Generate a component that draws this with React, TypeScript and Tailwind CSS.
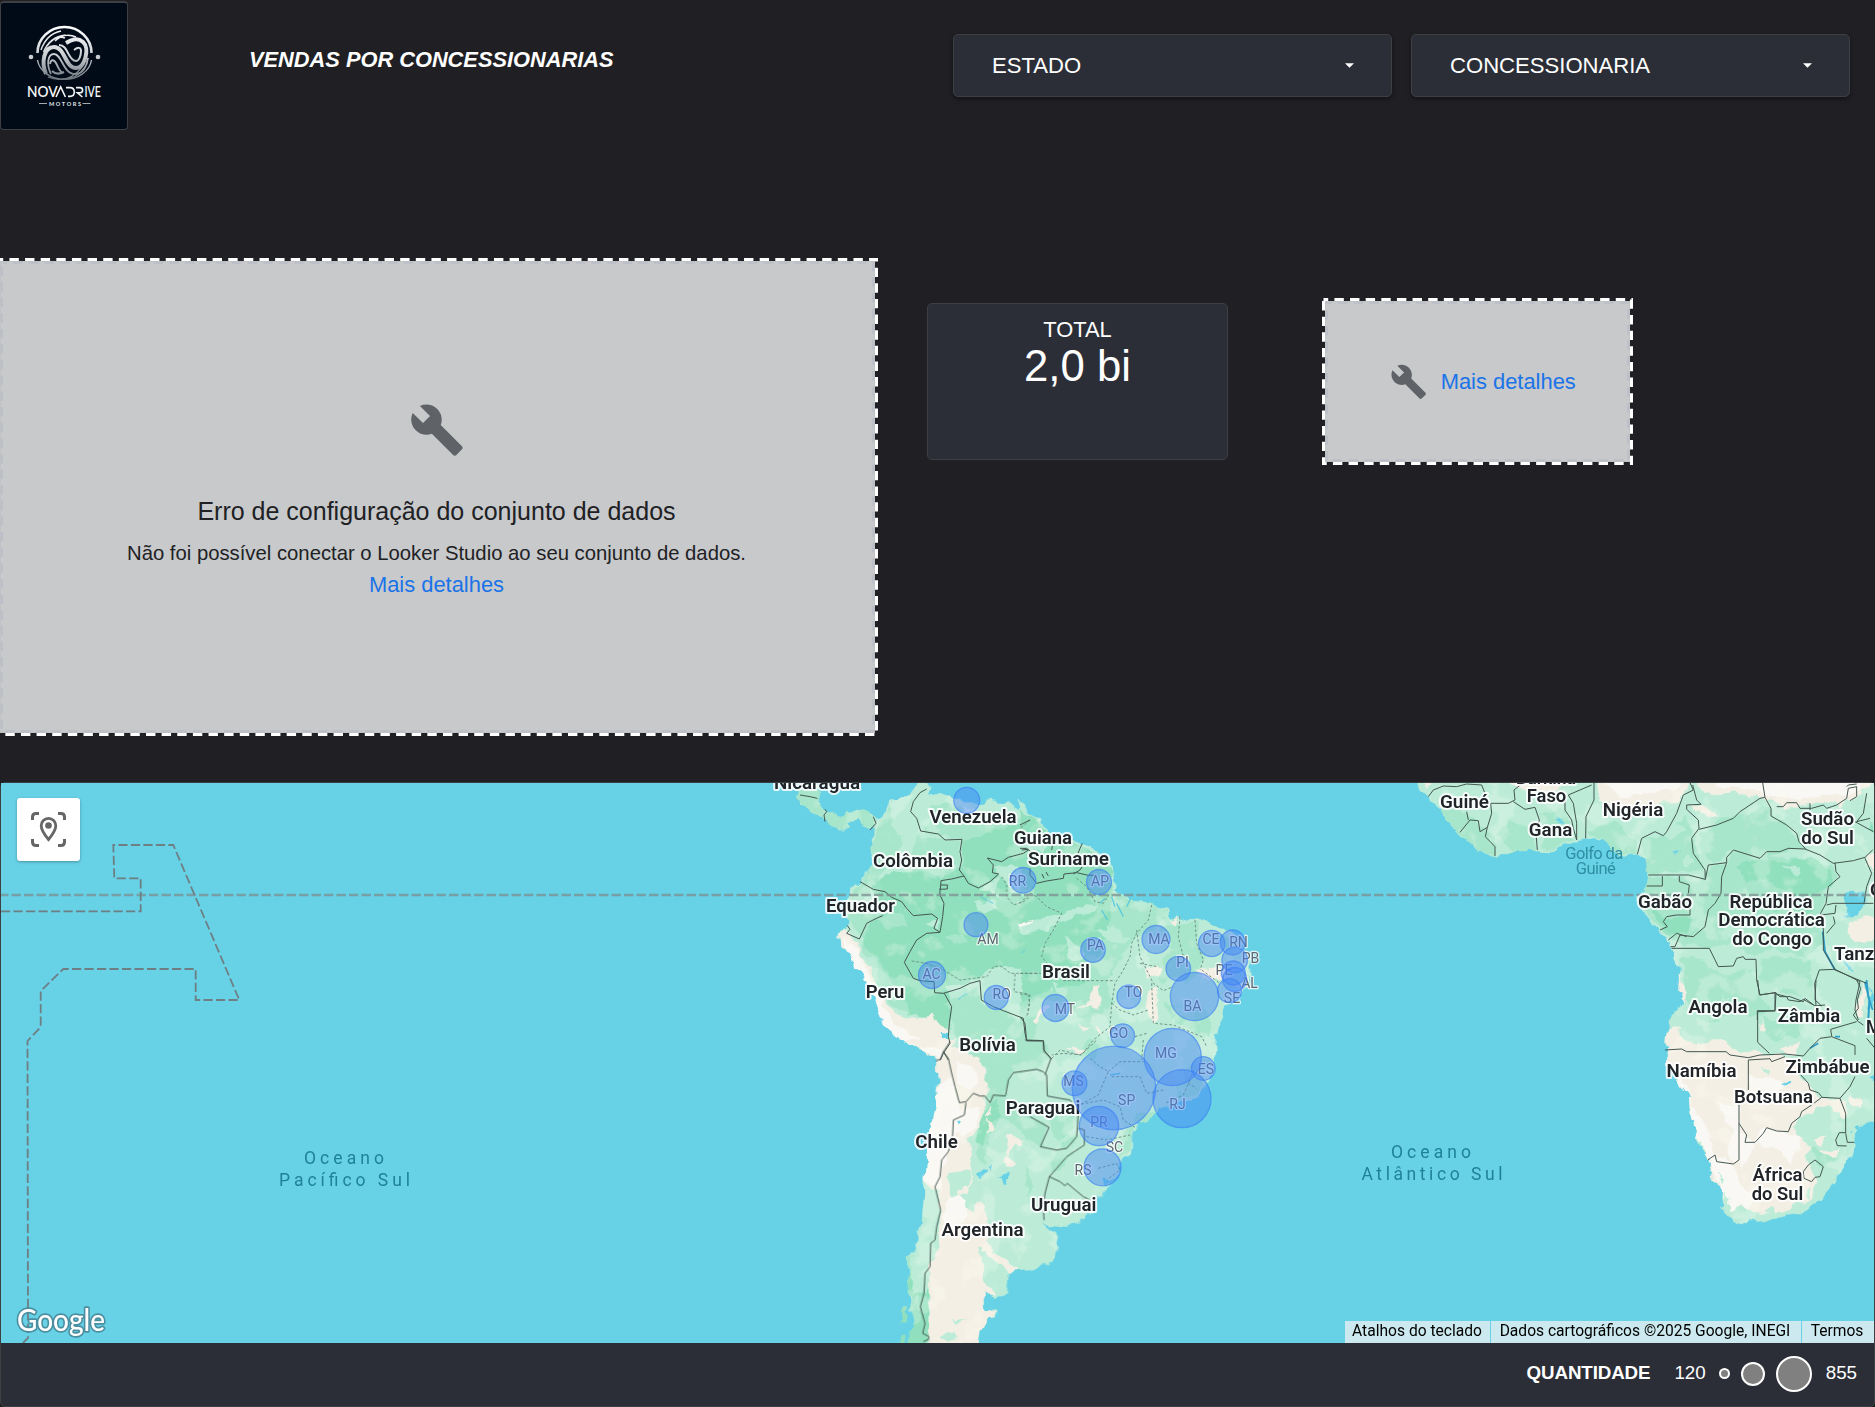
import React from "react";

const WRENCH =
  "M22.7 19l-9.1-9.1c.9-2.3.4-5-1.5-6.9-2-2-5-2.4-7.4-1.3L9 6 6 9 1.6 4.7C.4 7.1.9 10.1 2.9 12.1c1.9 1.9 4.6 2.4 6.9 1.5l9.1 9.1c.4.4 1 .4 1.4 0l2.3-2.3c.5-.4.5-1.1.1-1.4z";

function Wrench({ className }: { className: string }) {
  return (
    <svg viewBox="0 0 24 24" className={className}>
      <path d={WRENCH} fill="#5f6368" />
    </svg>
  );
}

function Logo() {
  return (
    <div className="mt-px h-[129px] w-[128px] shrink-0 overflow-hidden rounded-[4px] border border-[#3c4043] border-t-2 bg-[#010b18]">
      <svg viewBox="1 3 126 126" className="block h-full w-full">
        <defs>
          <linearGradient id="silver" gradientUnits="userSpaceOnUse" x1="0" y1="26" x2="0" y2="84">
            <stop offset="0" stopColor="#ffffff" />
            <stop offset="0.5" stopColor="#ccd0d4" />
            <stop offset="1" stopColor="#5d656e" />
          </linearGradient>
        </defs>
        <g fill="none" stroke="url(#silver)" strokeLinecap="butt">
          <path d="M37.5 53a27 26 0 0 1 54 0" strokeWidth="2.6" />
          <path d="M37.500 60a27.200 22 0 0 0 54 0" strokeWidth="1.4" />
          <path d="M46 74c-5-12-2-27 8-27 11 0 11 21 22 21 9 0 14-20 7-26-6-5-12-2-17 1" strokeWidth="4" />
          <path d="M51 74c-5-10-3-20 3-20 8 0 9 20 21 20 8 0 12-8 13-16" strokeWidth="1.8" />
          <path d="M50 64c1-6 5-4 7 1s4 7 6 8M52 71c4 4 8 3 12 1" strokeWidth="2" />
          <path d="M59 45c5 0 7 4 9 8s5 8 8 8c3 0 5-5 5-10 0-4-3-4-7-1" strokeWidth="2" />
          <path d="M41 50c4-12 11-17 20-19M43.500 52c5-12 13-16 22-17M47 46c6-8 12-10 18-8M55 41c6-6 14-7 21-4" strokeWidth="1.5" />
          <path d="M48 77c12 5 26 3 37-14M62 79c9 0 18-4 23-12" strokeWidth="1.3" />
        </g>
        <circle cx="31" cy="57" r="2.3" fill="#c9cdd2" />
        <circle cx="98" cy="57" r="2.3" fill="#c9cdd2" />
        <text x="27" y="97" textLength="30.500" lengthAdjust="spacingAndGlyphs" fill="#f4f5f6" fontFamily="Lato, sans-serif" fontWeight="600" fontSize="14.5">
          NOV
        </text>
        <path d="M56 97l4.700-10 4.700 10M66 87.600h4q4.300 0 4.300 4.400 0 4.400-4.300 4.400h-2M76 87.600h4q2.600 0 2.600 2.600t-2.600 2.600h-2.600l5 4.200" fill="none" stroke="#f4f5f6" strokeWidth="1.600" />
        <text x="84.500" y="97" textLength="16.500" lengthAdjust="spacingAndGlyphs" fill="#f4f5f6" fontFamily="Lato, sans-serif" fontWeight="600" fontSize="14.5">
          IVE
        </text>
        <text x="49" y="105.700" textLength="32" fill="#d7dadd" fontFamily="Lato, sans-serif" fontWeight="900" fontSize="5.6">
          MOTORS
        </text>
        <path d="M39 103.500h8M82.500 103.500h8" stroke="#b9bdc2" strokeWidth="0.9" />
      </svg>
    </div>
  );
}

function Dropdown({ label }: { label: string }) {
  return (
    <div className="flex h-[63px] w-[439px] items-center justify-between rounded-[5px] border border-[#3c4043] bg-[#2c2e37] pr-[37px] pl-[38px] shadow-[0_2px_4px_rgba(0,0,0,0.45)]">
      <span className="pt-px text-[22.1px] text-white">{label}</span>
      <svg viewBox="0 0 10 5" className="h-[5px] w-[9px]">
        <path d="M0 0h10L5 5z" fill="#fff" />
      </svg>
    </div>
  );
}

function DashedFrame({ w, h }: { w: number; h: number }) {
  return (
    <svg viewBox={`0 0 ${w} ${h}`} className="pointer-events-none absolute inset-0 h-full w-full">
      <rect x="1.500" y="1.500" width={w - 3} height={h - 3} fill="none" stroke="#201f24" strokeWidth="3.100" />
      <rect x="1.500" y="1.500" width={w - 3} height={h - 3} fill="none" stroke="#fff" strokeWidth="3.100" strokeDasharray="9.4 6.23" strokeDashoffset="4.700" />
      <rect x="4.500" y="4.500" width={w - 9} height={h - 9} fill="none" stroke="#bdc0c6" strokeWidth="3" strokeDasharray="9.4 6.23" strokeDashoffset="4" />
    </svg>
  );
}

const AT = {
  a: "translate(760 770) scale(0.33333)",
  b: "translate(1020 770) scale(0.33333)",
  c: "translate(860 1040) scale(0.33333)",
  d: "translate(1400 770) scale(0.33333)",
  e: "translate(1600 980) scale(0.33333)",
};

const LIGHT = "#bcecd8";
const MID = "#a8e6cb";
const DARK = "#91e0bd";
const SAND = "#f4efe4";
const SNOW = "#faf8f4";
const SEA = "#67d1e6";

type Shape = [keyof typeof AT, string, string];

const SHAPES: Shape[] = [
  // coastlines
  ["a", MID, "M112 78L130 20H175L172 80 190 112 212 130 242 145 272 122 300 120 335 133 350 150 345 185 325 165 295 140 265 160 262 178 245 178 235 165 190 152 150 122 120 108Z"],
  ["a", LIGHT, "M343 160L362 150 375 122 400 92 440 75 475 50 500 38 507 48 500 70 520 100 500 95 507 70 540 65 580 85 640 103 690 90 720 96 750 88 765 110 800 135 842 155V872H552L520 850 470 830 430 810 375 765 370 740 345 690 320 640 290 590 265 545 245 525 240 490 262 470 268 450 257 440V400L268 370 300 335 330 300 345 270 340 230 335 200Z"],
  ["b", LIGHT, "M-2 90L20 130 60 160 120 205 180 220 220 235 250 265 275 290 285 320 292 345 275 365 285 380 330 385 400 400 440 420 445 440 480 438 500 448 560 448 600 470 640 490 670 530 692 570 690 610 680 650 640 690 610 715 595 760 587 800 582 872H-2Z"],
  ["c", LIGHT, "M134 -2H1065L1062 60 1050 110 1020 160 970 185 920 200 880 220 830 250 815 275 810 310 803 350 770 400 740 440 700 495 685 520 660 545 620 560 570 552 550 542 580 575 593 620 570 670 510 690 450 695 446 720 443 760 405 770 370 760V800L385 817 400 812 398 805 408 808V830L385 835 365 870 360 920H150L165 860 155 810 145 730V650L165 630 185 560 195 480V420L200 350 210 290 225 220 235 150 232 70 215 50 180 30Z"],
  ["d", LIGHT, "M30 20L80 70 95 95 130 125 135 150 180 190 230 235 285 260 340 240 400 238 435 248 490 230 530 212 590 200 615 210 640 245 670 255 712 253 740 268 748 300 742 340 738 362 715 390 725 420 760 460 800 500 815 540 840 600 838 620 855 665 850 700 825 720 815 752H1440V20Z"],
  ["e", LIGHT, "M238 -2L250 40 253 70 235 90 215 110 205 150 198 210 200 250 235 300 270 350 275 400 285 450 300 500 325 540 345 600 370 640 362 680 385 710 410 735 450 720 540 712 610 700 660 660 700 610 730 560 750 535 760 490 757 460 770 440 840 418V315L812 297 840 280V-2Z"],
  // Amazon basin and north
  ["a", MID, "M345 185L362 150 400 100 450 85 440 180 410 250 370 300 345 345 300 400 262 450 268 395 330 300ZM520 100L600 110 650 140 842 160V250L690 265 620 210 560 205 500 180ZM480 190L550 210 600 215 600 310 540 330 470 320 440 270Z"],
  ["a", DARK, "M340 345L400 310 470 300 540 320 600 290 610 215 640 205 660 240 690 265 720 310 660 360 760 400 842 410V600L740 590 700 590 640 630 560 650 580 720 560 790 500 740 440 730 390 660 350 590 310 540 300 500 330 450 380 420 350 390Z"],
  ["a", DARK, "M620 215L700 180 780 165 842 230V370L760 400 700 370 720 310 690 270Z"],
  ["a", MID, "M575 690L640 660 670 700 740 730 790 760 842 820V872H680L640 800 580 760ZM262 440L330 390 360 430 300 500ZM300 520L350 560 400 640 450 730 400 710 340 640Z"],
  ["a", LIGHT, "M670 650L760 625 842 640V730L770 740 720 710ZM700 290L842 290V340L760 370ZM400 90L440 75 460 130 430 200 400 170ZM640 400L700 390 720 420 670 430ZM500 460L530 440 540 480ZM300 540L345 570 365 620 345 640Z"],
  ["a", MID, "M350 440L420 430 440 460 380 480ZM560 700L620 720 640 790 700 850 650 870 590 800ZM560 500L600 495 620 515 580 520Z"],
  ["b", DARK, "M0 120L60 165 130 210 200 235 260 280 280 310 270 380 290 430 250 480 270 520 240 590 280 620 200 640 130 690 90 650 50 730 0 700Z"],
  ["b", MID, "M280 380L400 400 440 430 400 480 350 500 300 560 260 640 280 700 200 760 150 700 120 760 60 740 30 800 0 800V700L90 660 200 640 260 500Z"],
  ["b", LIGHT, "M0 470L60 455 130 430 200 405 230 410 200 430 130 450 70 480 0 490ZM230 480L280 470 330 510 290 520ZM95 640L140 660 130 690ZM0 810L80 790 150 830 130 870H0ZM130 500L170 520 190 560 150 570 140 540ZM0 210L50 190 100 215 60 250 0 240Z"],
  ["b", MID, "M450 460L540 455 520 510 560 570 500 640 460 620 420 640 380 560 400 500ZM580 500L650 500 680 560 640 560ZM430 700L560 720 575 800 470 760Z"],
  ["b", SAND, "M375 590L410 580 430 600 410 625 380 615ZM388 660L412 650 410 700 415 750 400 760 388 720ZM525 600L600 595 640 600 620 630 560 620ZM220 650L238 645 245 690 235 720 200 705 175 712 215 690ZM40 750L75 705 95 710 60 735 45 765ZM230 765L240 790 225 785ZM450 445L480 440 470 460ZM180 770L205 775 190 785ZM0 462L35 457 0 470ZM640 650L665 640 670 655Z"],
  ["b", DARK, "M0 835L30 815 55 850 40 870H0Z"],
  // desert coast of Peru
  ["a", SAND, "M240 488L262 480 290 515 305 560 345 620 375 690 410 735 470 745 520 738 560 780 565 815 600 840 620 872H552L520 850 430 810 375 765 370 740 320 640 265 545 245 525Z"],
  ["a", SNOW, "M250 500L285 530 330 620 370 700 395 750 460 800 550 860 520 855 430 812 372 765 345 690 265 545ZM780 465L815 458 790 472ZM600 110L640 118 620 122Z"],
  ["a", SEA, "M540 793L560 795 572 815 560 820 540 805Z"],
  // Andes, Pampas and Patagonia
  ["c", MID, "M290 -2H550L570 55 550 90 460 98 437 165 390 185 375 150 385 90 340 50ZM365 190L440 170 560 262 545 320 500 290 470 260 420 240 390 290 370 370 350 340ZM145 650L190 640 212 600 205 700 190 760 185 910H150L165 860 155 810Z"],
  ["c", DARK, "M380 190L410 180 420 230 390 260 365 320 350 300ZM145 700L175 690 190 730 160 790 145 740ZM180 770L205 750 210 910H175ZM122 850L135 790 145 800 140 850ZM152 870L175 850 180 920H152ZM120 880L135 878 137 910H122Z"],
  ["c", MID, "M600 300L650 290 620 380 570 400ZM500 380L520 430 500 470ZM830 220L880 215 870 235 815 250 810 300 780 370 785 300ZM680 0L720 20 700 60 660 40ZM950 100L1050 60 1020 150 960 180ZM570 210L640 215 645 260 590 300Z"],
  ["c", SAND, "M134 -2H290L280 20 340 50 378 90 380 160 362 210 360 260 325 300 335 370 330 460 300 460 310 500 345 520 350 490 372 490 385 560 382 600 410 640 445 672 480 688 450 694 410 672 385 640 360 660 375 730 400 765 370 760V800L385 817 405 808V830L385 835 365 870 360 920H205L212 800 200 690 235 620 245 510 225 470 195 420 200 350 210 290 225 220 235 150 232 70 215 50Z"],
  ["c", LIGHT, "M195 440L230 450 240 510 225 590 210 640 205 700 185 760 165 760 150 700 165 630 185 560ZM355 620L385 640 440 690 443 740 400 730 375 690ZM270 400L330 390 325 440 300 450 290 520 270 470Z"],
  ["c", SNOW, "M200 350L225 220 240 130 270 110 290 180 310 240 275 300 245 380 240 450 225 440 196 420ZM290 60L340 80 360 130 330 150 290 130ZM180 20L250 30 235 60 180 25ZM270 470L300 460 320 520 270 580 245 540ZM300 220L350 200 350 260 310 290 290 270Z"],
  ["c", SAND, "M435 285L465 290 490 300 485 315 460 310 440 345 465 370 430 380 440 340ZM385 235L400 270 388 280ZM385 190L395 220 380 230ZM620 30L680 30 650 45Z"],
  ["c", SEA, "M355 400L375 385 382 395 372 410 362 418ZM383 378L396 375 390 390ZM418 410L445 405 443 430 430 430ZM295 245L308 242 300 255ZM735 420L755 415 750 425 735 438Z"],
  ["c", LIGHT, "M275 840L310 835 290 850ZM245 890L285 880 290 900 260 905ZM190 650L215 640 205 670Z"],
  // West and Central Africa
  ["d", MID, "M125 120L180 110 220 150 280 200 290 258 230 235 180 190 135 150ZM290 190L340 150 400 180 410 238 340 240ZM420 130L490 120 520 210 435 245 425 190ZM560 180L640 160 700 200 712 253 640 245 610 205ZM720 210L800 190 860 130 880 210 910 300 745 312 740 265ZM890 190L1000 140 1100 110 1170 170 1215 235 1140 245 1080 265 1000 240 930 280Z"],
  ["d", MID, "M745 320L910 330 930 290 980 280 1000 245 1300 285 1315 320 1280 360 1260 430 1270 530 1200 560 1100 530 1060 560 1000 520 930 530 830 520 780 470 730 420Z"],
  ["d", DARK, "M1010 290L1080 270 1170 280 1230 260 1290 300 1300 345 1230 380 1130 350 1090 330 1040 340ZM745 400L800 450 880 440 860 490 800 490ZM1060 400L1170 390 1240 420 1170 440ZM1410 150L1425 150V200L1405 180Z"],
  ["d", MID, "M845 560L900 570 960 610 950 700 890 740 860 660ZM960 620L1060 590 1075 680 1120 720 1060 740 980 680ZM1090 560L1230 570 1240 690 1140 660 1080 640Z"],
  ["d", SAND, "M300 38L345 45 395 70 440 70 480 60 500 20H310ZM585 20H870L850 75 842 98 790 90 760 110 700 130 660 105 600 95ZM880 20H1420L1400 75 1340 85 1320 110 1270 92 1230 105 1150 115 1110 85 1080 85 1000 70 940 75 900 60ZM875 100L905 105 950 130 960 150 900 130ZM1340 460L1400 440 1440 470V500L1390 525 1350 500ZM1405 250L1440 245V320L1400 290ZM60 20H115L85 50ZM838 615L855 665 850 700 835 660ZM1380 660L1390 640 1395 700 1390 750 1372 750Z"],
  ["d", SNOW, "M610 20H860L830 60 750 65 690 80 640 70ZM930 20H1400L1380 60 1320 75 1270 70 1200 90 1110 75 1040 55 960 55Z"],
  ["d", LIGHT, "M1385 60L1400 50 1440 55V130L1395 110ZM780 190L830 160 860 180 800 210ZM860 250L880 270 850 290ZM1150 290L1200 300 1190 320Z"],
  ["d", SEA, "M1335 375L1390 368 1392 400 1375 435 1335 442ZM1333 570L1360 598 1345 595ZM470 145L490 165 475 160ZM818 243L835 242 825 250Z"],
  // Southern Africa
  ["e", MID, "M250 10L380 0 370 60 420 60 400 100 340 130 290 110 260 60ZM480 110L560 130 600 120 590 170 530 180 490 160ZM390 0H520L520 35 480 40 440 20ZM640 500L700 520 700 540 660 560 650 540Z"],
  ["e", SAND, "M205 150L235 140 240 170 290 195 350 175 380 190 420 215 520 225 600 240 595 275 625 320 660 355 720 358 700 385 660 375 640 400 600 410 580 440 590 470 640 500 610 530 650 600 640 650 580 670 560 690 460 700 425 670 390 690 370 640 345 600 325 540 285 450 270 350 200 250 198 210ZM540 205L600 185 590 215 560 225ZM680 370L740 360 735 410 700 400ZM480 120L490 145 478 150ZM750 350L780 360 780 385 760 375ZM660 510L710 505 700 530ZM780 60L800 90 770 120ZM640 480L680 470 670 500Z"],
  ["e", SNOW, "M200 245L245 285 280 380 320 440 340 520 400 555 420 620 480 640 450 690 420 670 390 690 370 640 325 540 285 450 270 350ZM350 370L415 380 415 430 440 480 510 500 580 550 600 480 560 460 490 445 460 490 430 560 380 520 400 460ZM450 290L500 300 560 310 540 340 450 330Z"],
  ["e", LIGHT, "M480 255L510 270 505 290ZM355 580L365 590 360 605ZM410 690L420 710 400 705ZM650 400L700 410 690 450 650 440ZM600 420L640 410 650 440 620 445ZM500 690L520 685 525 700ZM580 435L600 440 590 455ZM615 640L635 625 630 650ZM375 640L385 655 378 675Z"],
  ["e", SEA, "M547 310L570 297 568 308 550 318ZM805 20L820 60 815 80Z"],
];

type Line = [keyof typeof AT, string];

const BORDERS: Line[] = [
  ["a", "M120 75L150 80 172 85M195 118L200 125 192 135 195 155M340 140L348 160 330 180M500 57L480 68 460 95 452 125 470 145 482 183 535 192 555 210 606 208 600 245 605 270 598 300 612 318M612 318L575 327 543 332 541 358 562 357M562 357V345H543M540 355V375L552 400 548 440 540 487M612 318L625 340 655 354 690 335 716 312 697 308 700 285 682 264 725 275 745 262 790 250 805 240 790 235M300 335L340 358 375 365 395 382 425 395 440 415 460 437 515 432 533 445 522 475 540 487M262 467L270 478 260 490 298 507 320 460 345 447 368 437M540 487L500 490 470 510 450 545 433 577 460 625 480 632 522 635 524 668 550 670 600 655 630 640 660 632 664 690 700 710 730 722 790 745 795 790 800 812H842M553 670L575 710 568 760 565 800 570 820 550 850 540 870M550 845L565 870M785 240L805 238"],
  ["b", "M30 295V315L50 340 80 333 130 325 132 312 170 308 205 316 230 315M0 235L20 235 45 255M95 240L98 222M187 220L178 240 172 255 190 285 180 300 160 312M66 312L72 325M78 306L85 318M0 740L15 760 20 812H70L72 840 95 868M0 165L30 150"],
  ["c", "M495 0L550 3 552 35 573 55 562 85 555 105M437 165L445 120 460 98 530 88 550 95 560 105 562 168 600 175 630 180 655 215 652 265 650 290 620 325 590 330 541 320 567 262 510 230M655 265L673 270V315L620 350 590 385 568 410 600 425 615 437 622 430 670 470 690 480M568 410L555 460 550 500 552 540M270 5L250 35 265 55 275 100 285 140 298 188 318 185 340 160 360 168 375 168 390 188 400 165 437 168M318 188L313 225 280 240 278 285 265 335 245 360 240 410 225 440 242 510 230 560 225 600 212 610 210 680 195 700 192 760 181 800 195 850 188 880 207 890 205 898 190 905M228 62L242 58 250 35"],
  ["d", "M85 80L100 60 130 48 170 50 200 42 245 45 255 70M180 187L210 150 235 152 240 185 262 172 275 130 272 100 325 100 345 90 342 60 365 42M205 150L200 125M262 172L256 200 285 230V258M340 95L375 118 405 112 418 150 408 190 412 240M495 75V120L515 150 520 175 530 210M575 45L540 60 505 75 520 100 530 160V210M582 38V90L558 140 557 205M870 38L880 60 850 75 830 130 800 185 790 197 765 185 725 205 712 253M878 45L890 90 903 103 860 105V118L895 150 897 175 875 205 880 250 915 300 916 328 865 315H745M897 178L950 165 1000 145 1020 125 1080 85 1095 82 1088 38M1095 82L1113 115V138L1160 165 1190 190 1197 215 1217 237M740 348H787V318M838 318V335L868 345 865 370M916 328L925 285 980 278 980 262 1000 240 1080 265 1100 245 1140 245 1165 235 1215 237 1260 255 1300 280 1360 272 1395 262 1418 240M980 278L965 320 963 370 945 400 925 420 915 470 880 500 840 495 825 530 812 530M805 510L830 490 860 500M870 395V435L830 435 800 440 790 455 802 470 780 480M815 535H928L955 590 1000 588 1010 565 1030 560 1035 568H1068L1070 630 1080 675 1125 668V722H1072V750M1125 668L1140 680 1170 680 1210 695 1215 685 1245 708 1275 705M1248 708L1244 640 1258 600 1305 598 1340 615 1380 635 1368 690 1365 720 1375 750M1305 278L1308 305 1320 320 1285 350 1278 400 1262 430 1270 480V540L1305 598M1280 405L1300 400H1420M1262 435L1305 430 1308 405M1280 490L1305 460 1300 440M1395 265L1415 310 1400 350 1392 400M1365 155L1420 185M1370 155L1410 145M1130 110L1150 110 1160 98 1190 98 1200 115 1235 115 1270 105 1280 115 1310 105 1340 85M1230 100V120M1340 85L1345 55 1370 50V80L1350 92M1370 42L1345 45 1340 50M1400 70L1390 130 1370 155M1305 600L1400 640"],
  ["e", "M195 210L245 207 260 215H378L390 225 445 233 480 225 555 222 610 228M473 0L478 45 528 38 525 93 473 95V187L508 220M528 42L560 50 565 60 600 65 610 58 640 75M648 0L645 60 665 78M445 240L510 236 515 245 555 230M445 240V330M417 370V540L400 552 350 545 345 525 323 540M417 430L440 465 435 487H465L490 460 500 443 530 453 565 455 575 430 600 410 605 395 635 375 665 352 720 355M600 282L625 310 630 330 655 338 665 350M610 228L630 205 660 175 695 170 765 197V225M765 290L750 320 720 355 737 400V460L742 487H763M695 168L692 148 770 125M718 458L707 480 712 497 740 498M735 458H718M610 575L625 555 645 540 670 560 660 590 645 592 635 605 612 595ZM770 0L782 25 772 60 775 85 760 105 775 125 790 135M800 175L825 205"],
];

const STATES: Line[] = [
  ["a", "M455 573L500 580 550 600 600 630 640 625 680 620 700 590 720 588 740 600 750 610H842M765 612L762 665 805 672 808 700 800 740M725 320L740 345V380L760 405 790 395 810 380M810 150L780 175"],
  ["b", "M0 400L30 370 50 380 80 410 125 430 100 480 75 520 65 560 85 585M170 325L200 350 225 395 250 400 270 370M395 405L385 450 350 490 335 520 330 560 310 600 285 640 275 700 270 770 220 810 185 855 130 850 95 855M0 610H50M130 632H285M350 480L360 560 380 600 400 640 430 662 460 650M480 440L475 500 490 560M525 450L530 520 550 570 540 600M275 700L300 720 340 735 385 720M395 640L400 760 460 765 545 800 560 830M545 600L600 640M345 800L380 790M360 580L410 590M0 672L30 675 25 730"],
  ["c", "M575 55L600 30 660 45 690 20 710 0M690 55L720 80 745 95 715 165 650 200M745 95L780 65 850 65M755 110L840 110 860 160 910 150M650 195L730 180 780 200 790 240 825 262M680 290L740 300 810 285M715 385L770 370 780 390 740 420M990 120L970 165 915 190M850 0L845 60M1000 90L985 130 1010 145"],
];

type Label = [string, number, number, number?];

const COUNTRIES: Label[] = [
  ["Nicarágua", 817, 788.700, 86], ["Venezuela", 973, 823, 87], ["Guiana", 1043, 843.500, 58], ["Suriname", 1068.500, 865, 81],
  ["Colômbia", 913, 866.500, 80], ["Equador", 860.500, 912, 69], ["Peru", 885, 998, 38.500], ["Bolívia", 987.500, 1051, 56.500],
  ["Brasil", 1066, 978, 48], ["Paraguai", 1043, 1113.500, 74.500], ["Chile", 936.500, 1147.500, 42.500], ["Argentina", 982.500, 1235.500, 82],
  ["Uruguai", 1063.700, 1210.500, 65.500], ["Burkina", 1546, 783.500, 60], ["Guiné", 1464.500, 807.500, 49], ["Faso", 1546.500, 801.500, 39.500], ["Gana", 1550.500, 836, 43.500],
  ["Nigéria", 1633, 815.700, 60.500], ["Sudão", 1827.500, 824.700, 53], ["do Sul", 1827.500, 843.500, 52.500], ["Gabão", 1665, 907.500, 54],
  ["República", 1771, 907.500, 83], ["Democrática", 1771.500, 926.300, 106.500], ["do Congo", 1772, 945.300, 79.500], ["Tanzânia", 1872, 959.500, 76], ["Quênia", 1900, 895.500, 60],
  ["Angola", 1718, 1012.500, 59], ["Zâmbia", 1809, 1021.500, 62.500], ["Namíbia", 1701.500, 1076.500, 70], ["Zimbábue", 1827.500, 1073.300, 84],
  ["Botsuana", 1773.500, 1103, 79], ["África", 1777.500, 1181, 50], ["do Sul", 1777.500, 1199.500, 51.500], ["Moçambique", 1917, 1032.500, 102],
];

const STATE_LABELS: Label[] = [
  ["RR", 1017.500, 885.700], ["AM", 988, 944], ["AC", 931.500, 978.500], ["RO", 1001.700, 998.500], ["AP", 1100, 885.700], ["PA", 1095.500, 950],
  ["MA", 1159, 943.700], ["CE", 1211, 943.700], ["RN", 1238.500, 946.700], ["PB", 1250.500, 962.500], ["PI", 1182.500, 966.700], ["PE", 1224, 975],
  ["AL", 1249.500, 988], ["SE", 1232, 1003], ["TO", 1133.500, 996.700], ["MT", 1065, 1013.500], ["BA", 1192.500, 1011], ["GO", 1118.500, 1038],
  ["MG", 1166, 1058], ["ES", 1206, 1073.500], ["MS", 1073.500, 1086], ["SP", 1126.700, 1104.500], ["RJ", 1177.500, 1109], ["PR", 1099, 1126.500],
  ["SC", 1114.500, 1151.500], ["RS", 1083, 1174.500],
];

const BUBBLES: [number, number, number][] = [
  [966.700, 800.300, 13.500], [1023, 880.300, 13.300], [976, 924.700, 12.500], [932, 975, 14], [996.300, 997.500, 12.500], [1099, 882, 13],
  [1093, 950, 12.800], [1156, 939.500, 14.500], [1211.700, 943.500, 13.700], [1232.700, 942.500, 13], [1234.700, 960, 13.300], [1233.300, 973, 12.500],
  [1234.700, 979.500, 12.500], [1229.500, 990.700, 12.500], [1178.300, 968.700, 12.800], [1194.500, 996.500, 24.700], [1128.700, 996.700, 12.300],
  [1055.500, 1008, 14], [1122.700, 1035.700, 12.400], [1172.700, 1057, 29.200], [1114, 1088, 42.300], [1074.500, 1083.300, 12.900],
  [1203.300, 1068.500, 12.400], [1182, 1098.700, 29.500], [1099, 1126, 20.200], [1102.500, 1167.300, 19],
];

function MapCanvas() {
  return (
    <svg viewBox="1 783 1873 560" className="block h-[560px] w-full" fontFamily="Roboto, sans-serif">
      <defs>
        <filter id="terrain" filterUnits="userSpaceOnUse" x="700" y="770" width="1190" height="590" colorInterpolationFilters="sRGB">
          <feTurbulence type="fractalNoise" baseFrequency="0.07" numOctaves="3" seed="4" result="noise" />
          <feDisplacementMap in="SourceGraphic" in2="noise" scale="11" xChannelSelector="R" yChannelSelector="G" result="land" />
          <feTurbulence type="fractalNoise" baseFrequency="0.035" numOctaves="4" seed="11" result="blotch" />
          <feColorMatrix in="blotch" type="matrix" values="0 0 0 0 1  0 0 0 0 1  0 0 0 0 0.96  9 0 0 0 -5" result="pale" />
          <feComponentTransfer in="pale" result="faint">
            <feFuncA type="linear" slope="0.24" />
          </feComponentTransfer>
          <feComposite in="faint" in2="land" operator="in" result="texture" />
          <feMerge>
            <feMergeNode in="land" />
            <feMergeNode in="texture" />
          </feMerge>
        </filter>
      </defs>
      <rect x="1" y="783" width="1873" height="560" fill={SEA} />
      <g filter="url(#terrain)">
        {SHAPES.map(([k, fill, d], i) => (
          <path key={i} transform={AT[k]} fill={fill} d={d} strokeLinejoin="round" stroke={fill} strokeWidth="1.5" />
        ))}
      </g>
      <g fill="none" stroke="#2f9fc9" strokeWidth="6">
        <path transform={AT.d} d="M1268 485L1275 545 1305 600M1395 635L1408 690 1405 750" />
        <path transform={AT.e} strokeWidth="5" d="M800 0L805 50 818 90M630 205L655 190M705 170H720" />
      </g>
      <g fill="none" stroke="#49c4e0" strokeWidth="4" opacity="0.8">
        <path transform={AT.b} d="M245 420L262 450M290 400L310 440M320 410L332 385M255 385L240 400M285 410L275 380" />
        <path transform={AT.a} d="M595 688L620 670M660 380L700 400M785 550L795 540" strokeWidth="3" />
        <path transform={AT.c} d="M750 105L780 100" />
      </g>
      {STATES.map(([k, d], i) => (
        <path key={i} transform={AT[k]} d={d} fill="none" stroke="#64867a" strokeWidth="2.6" strokeDasharray="8 6" />
      ))}
      {BORDERS.map(([k, d], i) => (
        <path key={i} transform={AT[k]} d={d} fill="none" stroke="#435650" strokeWidth="3" strokeLinejoin="round" />
      ))}
      <path d="M1 895H1874" stroke="#7c8f90" strokeOpacity="0.75" strokeWidth="2.500" strokeDasharray="9.4 3.1" strokeDashoffset="2" />
      <path
        d="M1 911.300H140.700V878.300H114.300L113.300 845H173.300L239.300 1000H195.700V969H63.300L40.700 991V1027L27.500 1041 28 1338 23 1343"
        fill="none"
        stroke="#6e7f84"
        strokeWidth="1.8"
        strokeDasharray="9.2 3.300"
      />
      <g fill="#2f8fa3" textAnchor="middle" fontSize="16.500">
        <text x="1594.300" y="859" textLength="58">Golfo da</text>
        <text x="1595.700" y="873.500" textLength="40">Guiné</text>
      </g>
      <g fill="#1f8299" fontSize="17.500">
        <text x="304" y="1164" textLength="80">Oceano</text>
        <text x="279" y="1186" textLength="131">Pacífico Sul</text>
        <text x="1391" y="1158" textLength="80">Oceano</text>
        <text x="1361.500" y="1180" textLength="141">Atlântico Sul</text>
      </g>
      <g fill="#5c6670" stroke="#fff" strokeOpacity="0.75" strokeWidth="2.500" paintOrder="stroke" textAnchor="middle" fontSize="14" strokeLinejoin="round">
        {STATE_LABELS.map(([t, x, y]) => (
          <text key={t} x={x} y={y}>{t}</text>
        ))}
      </g>
      <g fill="#212529" stroke="#fff" strokeOpacity="0.85" strokeWidth="4" paintOrder="stroke" textAnchor="middle" fontSize="18.750" fontWeight="600" strokeLinejoin="round">
        {COUNTRIES.map(([t, x, y, w], i) => (
          <text key={i} x={x} y={y} textLength={w} lengthAdjust="spacingAndGlyphs">{t}</text>
        ))}
      </g>
      {BUBBLES.map(([x, y, r], i) => (
        <circle key={i} cx={x} cy={y} r={r - 0.5} fill="#4285f4" fillOpacity="0.48" stroke="#3b7df3" strokeOpacity="0.6" strokeWidth="1.300" />
      ))}
      <text x="17" y="1331" textLength="88" lengthAdjust="spacingAndGlyphs" fontFamily="Lato, sans-serif" fontWeight="500" fontSize="30.500" fill="#fff" stroke="#4a8fa0" strokeWidth="3.500" paintOrder="stroke" strokeLinejoin="round">
        Google
      </text>
    </svg>
  );
}

export default function App() {
  return (
    <div className="flex h-[1407px] w-[1875px] flex-col overflow-hidden bg-[#201f24] font-['Liberation_Sans',Arial,sans-serif]">
      <header className="flex h-[258px] items-start">
        <Logo />
        <h1 className="mt-[47px] ml-[121px] text-[21.8px] leading-[26px] font-bold whitespace-nowrap text-white italic">VENDAS POR CONCESSIONARIAS</h1>
        <div className="mt-[34px] mr-[25px] ml-auto flex gap-[19px]">
          <Dropdown label="ESTADO" />
          <Dropdown label="CONCESSIONARIA" />
        </div>
      </header>

      <main className="flex h-[524px] items-start">
        <section className="relative -ml-[3px] flex h-[478px] w-[881px] flex-col items-center bg-[#c8c9cb] pt-[144px] pr-[2px]">
          <DashedFrame w={881} h={478} />
          <Wrench className="h-[56px] w-[56px]" />
          <p className="mt-[37px] text-[25px] leading-[32px] text-[#202124]">Erro de configuração do conjunto de dados</p>
          <p className="mt-[14px] text-[20.3px] leading-[24px] text-[#202124]">Não foi possível conectar o Looker Studio ao seu conjunto de dados.</p>
          <a className="mt-[6px] text-[21.9px] leading-[28px] text-[#1a73e8]">Mais detalhes</a>
        </section>
        <section className="mt-[45px] ml-[49px] flex h-[157px] w-[301px] flex-col items-center rounded-[5px] border border-[#3c4043] bg-[#2c2e37] pt-[13px] text-white">
          <span className="text-[21.9px] leading-[26px]">TOTAL</span>
          <span className="text-[43.7px] leading-[46px]">2,0 bi</span>
        </section>
        <section className="relative mt-[40px] ml-[94px] flex h-[167px] w-[311px] items-center justify-center gap-[13px] bg-[#c8c9cb] pl-[11px]">
          <DashedFrame w={311} h={167} />
          <Wrench className="h-[37.5px] w-[37.5px]" />
          <a className="pt-px text-[21.9px] text-[#1a73e8]">Mais detalhes</a>
        </section>
      </main>

      <section className="relative h-[625px] rounded-[5px] border border-[#3c4043] bg-[#2c2e37]">
        <MapCanvas />
        <button className="absolute top-[15px] left-[16px] flex h-[63px] w-[63px] items-center justify-center rounded-[3px] bg-white shadow-[0_1px_3px_rgba(0,0,0,0.3)]">
          <svg viewBox="0 0 35 35" className="h-[35px] w-[35px]" fill="none" stroke="#666" strokeWidth="3">
            <path d="M1.500 8V5q0-3.500 3.500-3.500h3M27 1.500h3q3.500 0 3.500 3.500v3M33.500 27v3q0 3.500-3.500 3.500h-3M8 33.500H5q-3.500 0-3.500-3.500v-3" />
            <path d="M17.500 27.500C13 22 10.200 18 10.200 13.700a7.300 7.300 0 0 1 14.600 0c0 4.300-2.800 8.300-7.300 13.800z" strokeWidth="2.800" />
            <circle cx="17.500" cy="13.500" r="3.300" fill="#666" stroke="none" />
          </svg>
        </button>
        <div className="absolute top-[538px] right-0 flex h-[22px] gap-px font-[Roboto,sans-serif] text-[15.6px] leading-[21px] whitespace-nowrap text-black">
          <span className="w-[145px] bg-[#cbe9ee] pr-px text-center">Atalhos do teclado</span>
          <span className="w-[310px] bg-[#cbe9ee] pr-[2px] text-center">Dados cartográficos ©2025 Google, INEGI</span>
          <span className="w-[72px] bg-[#cbe9ee] pr-[2px] text-center">Termos</span>
        </div>
        <div className="flex h-[61px] items-center justify-end pr-[17px] text-[18.75px] text-white">
          <b className="mr-[24px] tracking-[-0.12px]">QUANTIDADE</b>
          <span className="mr-[13px]">120</span>
          <i className="mr-[11px] h-[11px] w-[11px] rounded-full border-2 border-white bg-[#808080]" />
          <i className="mr-[11px] h-[24px] w-[24px] rounded-full border-2 border-white bg-[#808080]" />
          <i className="mr-[14px] h-[36px] w-[36px] rounded-full border-2 border-white bg-[#808080]" />
          <span>855</span>
        </div>
      </section>
    </div>
  );
}
